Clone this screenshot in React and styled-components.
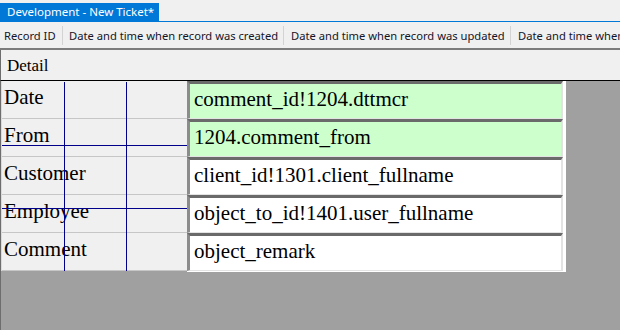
import React from 'react';
import styled, { createGlobalStyle } from 'styled-components';

const GlobalStyle = createGlobalStyle`
  * { box-sizing: border-box; }
  html, body { margin: 0; padding: 0; background: #f0f0f0; }
`;

const serif = "'Liberation Serif', 'Times New Roman', 'DejaVu Serif', serif";

const Window = styled.div`
  width: 620px;
  height: 330px;
  display: flex;
  flex-direction: column;
  background: #f0f0f0;
  overflow: hidden;
`;

const TabStrip = styled.div`
  height: 22px;
  padding-top: 3px;
  display: flex;
  border-bottom: 1px solid #0078d7;
`;

const Tab = styled.div`
  height: 18px;
  padding: 0 7px;
  width: 159px;
  background: #0078d7;
  color: #fff;
  font-family: 'Noto Sans', sans-serif;
  font-size: 11.5px;
  line-height: 18px;
  white-space: nowrap;
`;

const ColumnBar = styled.div`
  height: 28px;
  display: flex;
  align-items: center;
  border-bottom: 2px solid #7c7c7c;
  font-family: 'Noto Sans', sans-serif;
  font-size: 11.2px;
  color: #141428;
  white-space: nowrap;
  overflow: hidden;
`;

const HeaderCell = styled.div`
  flex: none;
  width: ${(p) => p.$w}px;
  padding-left: ${(p) => p.$pad}px;
  overflow: hidden;
`;

const Sep = styled.div`
  flex: none;
  width: 1px;
  height: 19px;
  background: #d3d3d3;
`;

const DetailBar = styled.div`
  height: 30px;
  padding: 6px 0 0 6px;
  border-left: 1px solid #6d6d6d;
  font-family: ${serif};
  font-size: 17px;
  line-height: 20px;
  color: #000;
`;

const FormArea = styled.div`
  flex: 1;
  display: flex;
  align-items: flex-start;
  background: #a0a0a0;
  border-top: 1px solid #000;
  border-left: 1px solid #6d6d6d;
`;

const LabelCol = styled.div`
  position: relative;
  width: 186px;
  border-left: 1px solid #dadada;
  background: #f0f0f0;
`;

const LabelRow = styled.div`
  height: 38px;
  padding: 4px 0 0 2px;
  border-bottom: 1px solid #c6c6c6;
  font-family: ${serif};
  font-size: 21px;
  line-height: 24px;
  color: #000;
`;

const GuideV = styled.div`
  position: absolute;
  top: 1px;
  bottom: 0;
  left: ${(p) => p.$x}px;
  width: 1px;
  background: #00008b;
`;

const GuideH = styled.div`
  position: absolute;
  left: 0;
  right: 0;
  top: ${(p) => p.$y}px;
  height: 1px;
  background: #00008b;
`;

const FieldCol = styled.div`
  width: 379px;
  border-right: 3px solid #fff;
  border-bottom: 1px solid #fff;
`;

const Field = styled.div`
  height: 38px;
  padding: 3px 0 0 4px;
  background: ${(p) => (p.$calc ? '#ccffcc' : '#fff')};
  border-top: 3px solid #6a6a6a;
  border-left: 3px solid #8c8c8c;
  border-right: 2px solid #e3e3e3;
  border-bottom: 1px solid #e3e3e3;
  font-family: ${serif};
  font-size: 21px;
  line-height: 24px;
  color: #000;
  white-space: nowrap;
  overflow: hidden;
`;

const columns = [
  { w: 62, pad: 4, text: 'Record ID' },
  { w: 220, pad: 6, text: 'Date and time when record was created' },
  { w: 226, pad: 7, text: 'Date and time when record was updated' },
  { w: 120, pad: 7, text: 'Date and time when record was deleted' },
];

const rows = [
  { label: 'Date', value: 'comment_id!1204.dttmcr', calc: true },
  { label: 'From', value: '1204.comment_from', calc: true },
  { label: 'Customer', value: 'client_id!1301.client_fullname' },
  { label: 'Employee', value: 'object_to_id!1401.user_fullname' },
  { label: 'Comment', value: 'object_remark' },
];

export default function App() {
  return (
    <>
      <GlobalStyle />
      <Window>
        <TabStrip>
          <Tab>Development - New Ticket*</Tab>
        </TabStrip>
        <ColumnBar>
          {columns.map((c, i) => (
            <React.Fragment key={c.text}>
              {i > 0 && <Sep />}
              <HeaderCell $w={c.w} $pad={c.pad}>
                {c.text}
              </HeaderCell>
            </React.Fragment>
          ))}
        </ColumnBar>
        <DetailBar>Detail</DetailBar>
        <FormArea>
          <LabelCol>
            {rows.map((r) => (
              <LabelRow key={r.label}>{r.label}</LabelRow>
            ))}
            <GuideV $x={62} />
            <GuideV $x={124} />
            <GuideH $y={64} />
            <GuideH $y={127} />
          </LabelCol>
          <FieldCol>
            {rows.map((r) => (
              <Field key={r.label} $calc={r.calc}>
                {r.value}
              </Field>
            ))}
          </FieldCol>
        </FormArea>
      </Window>
    </>
  );
}
